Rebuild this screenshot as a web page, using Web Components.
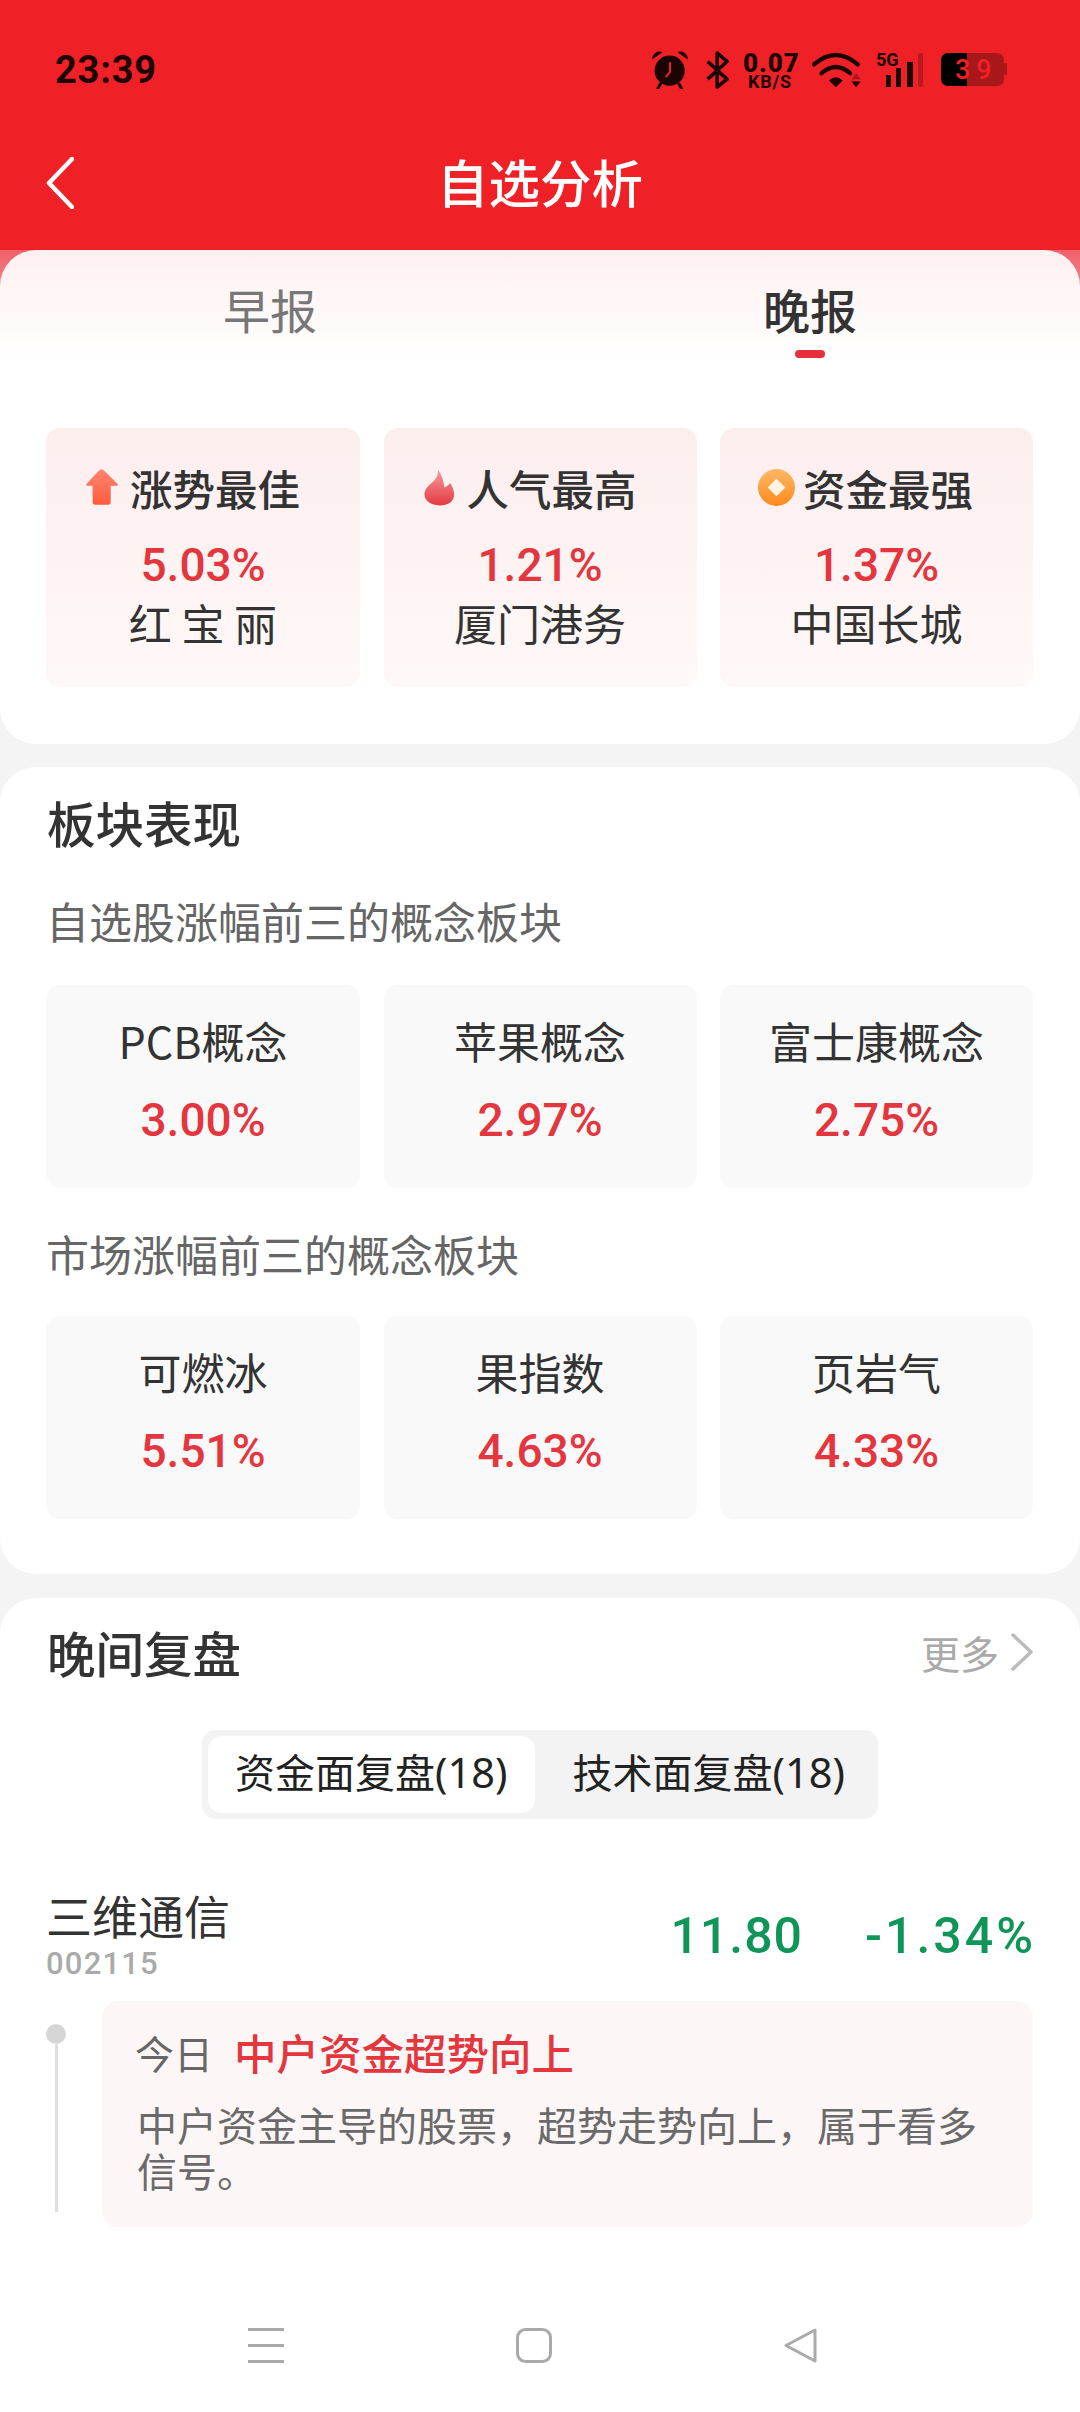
<!DOCTYPE html>
<html lang="zh-CN">
<head>
<meta charset="utf-8">
<title>自选分析</title>
<style>
  html, body { margin: 0; padding: 0; }
  body {
    width: 1080px;
    height: 2412px;
    overflow: hidden;
    display: flex;
    flex-direction: column;
    background: #f4f4f4;
    color: #333;
    font-family: "Noto Sans CJK SC", "Noto Sans", sans-serif;
  }
</style>
</head>
<body>

<template id="status-bar">
  <style>
    :host { display: flex; align-items: center; justify-content: space-between; height: 38px; padding: 51px 73px 0 55px; color: #1c0404; }
    .time { font: 700 38px/38px Roboto, sans-serif; letter-spacing: 0.8px; }
    .icons { display: flex; align-items: center; }
    svg { display: block; }
    .speed { width: 54px; margin: 0 15px 0 14px; text-align: center; font-family: Roboto, sans-serif; font-weight: 700; }
    .speed b { display: block; font-size: 26px; line-height: 22px; letter-spacing: 0.9px; padding-top: 1px; }
    .speed i { display: block; font-size: 18px; line-height: 15px; font-style: normal; letter-spacing: 0.8px; }
    .signal { position: relative; width: 47px; height: 34px; margin-left: 15px; }
    .signal span { position: absolute; left: 0; top: -3px; font: 700 18px/20px Roboto, sans-serif; }
    .battery { position: relative; width: 66px; height: 34px; margin-left: 18px; }
    .battery span { position: absolute; left: 14px; top: 1px; font: 500 27px/32px Roboto, sans-serif; letter-spacing: 6px; color: #f02027; }
  </style>
  <div class="time">23:39</div>
  <div class="icons">
    <svg width="36" height="38" viewBox="97 62 108 116">
      <circle cx="150" cy="122" r="46" fill="#1c0404"/>
      <path d="M97 86 C100 70 112 62 126 66 Z M205 86 C202 70 190 62 176 66 Z" fill="#1c0404" stroke="#1c0404" stroke-width="3" stroke-linejoin="round"/>
      <path d="M122 162 L114 176 M178 162 L186 176" stroke="#1c0404" stroke-width="9" stroke-linecap="round"/>
      <path d="M151 96 L151 126 L138 142" fill="none" stroke="#f02027" stroke-width="6"/>
    </svg>
    <svg width="23" height="38" viewBox="258 60 70 116" style="margin-left:18px">
      <path d="M263 92 L322 146 L292 170 L292 66 L322 92 L263 146" fill="none" stroke="#1c0404" stroke-width="11" stroke-linejoin="round"/>
    </svg>
    <div class="speed"><b>0.07</b><i>KB/S</i></div>
    <svg width="49" height="36" viewBox="575 66 150 108">
      <path d="M581 103 Q648 45 715 103" fill="none" stroke="#1c0404" stroke-width="13" stroke-linecap="round"/>
      <path d="M604 130 Q648 92 692 130" fill="none" stroke="#1c0404" stroke-width="13" stroke-linecap="round"/>
      <path d="M627 152 Q648 133 669 152 L648 173 Z" fill="#1c0404"/>
      <path d="M710 130 L724 148 L696 148 Z" fill="#a81818"/>
      <path d="M696 155 L724 155 L710 173 Z" fill="#1c0404"/>
    </svg>
    <div class="signal">
      <svg width="47" height="34" viewBox="876 53 47 34">
        <rect x="886" y="75" width="5" height="12" fill="#1c0404"/>
        <rect x="896" y="68" width="5" height="19" fill="#1c0404"/>
        <rect x="907" y="62" width="6" height="25" fill="#1c0404"/>
        <rect x="918" y="53" width="5" height="34" rx="2" fill="#b81a1e"/>
      </svg>
      <span>5G</span>
    </div>
    <div class="battery">
      <svg width="66" height="34" viewBox="941 54 66 34">
        <rect x="941" y="54" width="63" height="33" rx="7" fill="#a81818"/>
        <rect x="1004" y="64" width="3" height="12" rx="1.5" fill="#a81818"/>
        <path d="M948 54 H967 V87 H948 A7 7 0 0 1 941 80 V61 A7 7 0 0 1 948 54 Z" fill="#000"/>
      </svg>
      <span>39</span>
    </div>
  </div>
</template>

<template id="title-bar">
  <style>
    :host { display: grid; grid-template-columns: 1fr auto 1fr; align-items: center; height: 60px; margin-top: 62px; padding: 0 46px 39px; }
    svg { display: block; margin-top: 3px; }
    .title { font-size: 51.5px; line-height: 60px; font-weight: 500; color: #fff; }
  </style>
  <svg width="28" height="52" viewBox="0 0 28 52">
    <path d="M26 2 L3 26 L26 50" fill="none" stroke="#fff" stroke-width="4.5" stroke-linecap="round" stroke-linejoin="round"/>
  </svg>
  <div class="title"><slot></slot></div>
</template>

<template id="panel-card">
  <style>
    :host { display: block; background: #fff; border-radius: 36px; }
  </style>
  <slot></slot>
</template>

<template id="report-tabs">
  <style>
    :host { display: grid; grid-template-columns: 1fr 1fr; padding-top: 27px; text-align: center; font-size: 47px; line-height: 64px; }
    .tab { color: #777; }
    .tab.on { color: #333; font-weight: 500; }
    .tab::after { content: ""; display: block; width: 30px; height: 8px; margin: 9px auto 0; border-radius: 4px; }
    .tab.on::after { background: #e8303a; }
  </style>
  <div class="tab">早报</div>
  <div class="tab on">晚报</div>
</template>

<template id="card-row">
  <style>
    :host { display: grid; grid-template-columns: 314px 313px 313px; gap: 23.5px; padding: 0 46px; }
  </style>
  <slot></slot>
</template>

<template id="best-card">
  <style>
    :host { display: block; height: 259px; box-sizing: border-box; padding-top: 29px; border-radius: 14px; background: linear-gradient(#fdeeee, #fff8f8); text-align: center; }
    .head { display: flex; align-items: center; gap: 12px; height: 60px; padding-left: 40px; font-size: 42.5px; font-weight: 500; color: #333; }
    .pct { margin-top: 19px; font: 500 46px/59px Roboto, sans-serif; color: #e4363e; }
    .name { font-size: 43px; line-height: 54px; color: #333; }
  </style>
  <div class="head"><slot name="icon"></slot><slot name="title"></slot></div>
  <div class="pct"><slot name="pct"></slot></div>
  <div class="name"><slot name="name"></slot></div>
</template>

<template id="sector-cell">
  <style>
    :host { display: block; height: 203px; box-sizing: border-box; padding-top: 25px; border-radius: 14px; background: #f9f9f9; text-align: center; }
    .label { font-size: 43px; line-height: 60px; color: #333; }
    .pct { margin-top: 20px; font: 500 46px/60px Roboto, sans-serif; color: #e4363e; }
  </style>
  <div class="label"><slot></slot></div>
  <div class="pct"><slot name="pct"></slot></div>
</template>

<template id="section-head">
  <style>
    :host { display: flex; align-items: center; justify-content: space-between; height: 64px; padding: 0 47px; }
    .title { font-size: 48.5px; line-height: 64px; font-weight: 500; color: #333; }
    .more { display: flex; align-items: center; gap: 12px; font-size: 39px; color: #aaa; }
  </style>
  <div class="title"><slot></slot></div>
  <div class="more"><slot name="more"></slot></div>
</template>

<template id="sub-title">
  <style>
    :host { display: block; padding-left: 46px; font-size: 43px; line-height: 60px; color: #666; }
  </style>
  <slot></slot>
</template>

<template id="review-tabs">
  <style>
    :host { display: flex; justify-content: center; margin-top: 46px; }
    .box { display: flex; gap: 11px; padding: 6px; border-radius: 14px; background: #f3f3f3; font-size: 40px; line-height: 71px; color: #222; }
    .tab { padding: 0 27px 5px; border-radius: 14px; }
    .tab.on { background: #fff; }
    .n { font-family: "Noto Sans", sans-serif; font-size: 41.5px; }
  </style>
  <div class="box">
    <div class="tab on">资金面复盘<span class="n">(18)</span></div>
    <div class="tab">技术面复盘<span class="n">(18)</span></div>
  </div>
</template>

<template id="stock-row">
  <style>
    :host { display: flex; align-items: center; justify-content: space-between; margin-top: 66px; padding: 0 44px 0 46px; }
    .name { font-size: 46px; line-height: 58px; margin-bottom: 3px; color: #333; }
    .code { font: 500 31px/36px Roboto, sans-serif; color: #aaa; letter-spacing: 1.2px; }
    .quote { display: flex; gap: 62px; padding-top: 4px; font: 500 50px/60px Roboto, sans-serif; color: #0f9558; }
    .quote .price { letter-spacing: 1px; }
    .quote .change { letter-spacing: 3px; }
  </style>
  <div>
    <div class="name"><slot name="name"></slot></div>
    <div class="code"><slot name="code"></slot></div>
  </div>
  <div class="quote">
    <span class="price"><slot name="price"></slot></span>
    <span class="change"><slot name="change"></slot></span>
  </div>
</template>

<template id="signal-note">
  <style>
    :host { display: flex; gap: 36px; margin-top: 19px; padding: 0 47px 0 46px; }
    .rail { display: flex; flex-direction: column; align-items: center; width: 20px; padding: 23px 0 15px; box-sizing: border-box; }
    .dot { width: 20px; height: 20px; border-radius: 50%; background: #d6d6d6; }
    .line { width: 3px; flex: 1; background: #dedede; }
    .box { flex: 1; box-sizing: border-box; height: 226px; padding: 21px 34px 0 35px; border-radius: 16px; background: #fdf6f6; }
    .top { display: flex; gap: 21px; line-height: 60px; margin-left: -2px; }
    .day { font-size: 39px; color: #666; }
    .tag { font-size: 42.5px; font-weight: 500; color: #e4363e; }
    .body { margin-top: 19px; font-size: 40px; line-height: 46px; color: #6a6a6a; }
  </style>
  <div class="rail"><div class="dot"></div><div class="line"></div></div>
  <div class="box">
    <div class="top"><span class="day">今日</span><span class="tag"><slot name="tag"></slot></span></div>
    <div class="body"><slot></slot></div>
  </div>
</template>

<template id="nav-bar">
  <style>
    :host { display: flex; gap: 232px; margin-top: auto; padding: 0 0 49px 248px; }
    svg { display: block; }
  </style>
  <svg width="36" height="35" viewBox="0 0 36 35">
    <path d="M0 1.5 H36 M0 17.5 H36 M0 33.5 H36" stroke="#aaa" stroke-width="3"/>
  </svg>
  <svg width="36" height="35" viewBox="0 0 36 35">
    <rect x="1.5" y="1.5" width="33" height="32" rx="8" fill="none" stroke="#aaa" stroke-width="3"/>
  </svg>
  <svg width="36" height="35" viewBox="0 0 36 35">
    <path d="M31 2 L2 17.5 L31 33 Z" fill="none" stroke="#aaa" stroke-width="3" stroke-linejoin="round"/>
  </svg>
</template>

<script>
  // every element here is just its template in an open shadow root
  ['status-bar', 'title-bar', 'panel-card', 'report-tabs', 'card-row', 'best-card', 'sector-cell',
   'section-head', 'sub-title', 'review-tabs', 'stock-row', 'signal-note', 'nav-bar'].forEach((name) => {
    customElements.define(name, class extends HTMLElement {
      constructor() {
        super();
        const shadowRoot = this.attachShadow({ mode: 'open' });
        shadowRoot.appendChild(document.getElementById(name).content.cloneNode(true));
      }
    });
  });

  customElements.define('app-header', class extends HTMLElement {
    constructor() {
      super();
      this.attachShadow({ mode: 'open' }).innerHTML = `
        <style>:host { display: block; height: 250px; background: #f02027; }</style>
        <slot></slot>`;
    }
  });

  customElements.define('app-page', class extends HTMLElement {
    constructor() {
      super();
      this.attachShadow({ mode: 'open' }).innerHTML = `
        <style>
          :host { display: flex; flex-direction: column; flex: 1; gap: 23px; min-height: 0;
            background: linear-gradient(#f0606a 0, #f58a90 46px, #f4f4f4 46px); }
          ::slotted(:last-child) { flex: 1; display: flex; flex-direction: column; border-radius: 36px 36px 0 0; margin-top: 1px; }
        </style>
        <slot></slot>`;
    }
  });
</script>

<app-header>
  <status-bar></status-bar>
  <title-bar>自选分析</title-bar>
</app-header>

<app-page>
  <panel-card style="padding-bottom:57px;background:linear-gradient(#fff0f0,#fff 110px)">
    <report-tabs></report-tabs>
    <card-row style="margin-top:70px">
      <best-card>
        <svg slot="icon" width="32" height="36" viewBox="50 40 97 107" style="display:block">
          <defs><linearGradient id="a" x1="0" y1="0" x2="0" y2="1"><stop offset="0" stop-color="#ff8570"/><stop offset="1" stop-color="#ff5b3e"/></linearGradient></defs>
          <path d="M97 40 Q92 40 88 45 L52 84 Q47 90 56 90 L70 90 L70 140 Q70 147 77 147 L118 147 Q125 147 125 140 L125 90 L140 90 Q150 90 145 84 L106 45 Q102 40 97 40 Z" fill="url(#a)"/>
        </svg>
        <span slot="title">涨势最佳</span>
        <span slot="pct">5.03%</span>
        <span slot="name">红 宝 丽</span>
      </best-card>
      <best-card>
        <svg slot="icon" width="31" height="37" viewBox="70 36 95 112" style="display:block">
          <defs><linearGradient id="b" x1="0" y1="0" x2="0" y2="1"><stop offset="0" stop-color="#f79a9c"/><stop offset="1" stop-color="#e43a41"/></linearGradient></defs>
          <path d="M113 37 C126 58 131 74 132 92 C140 88 147 84 150 78 C172 110 166 147 118 147 C85 147 62 125 75 98 C84 80 116 70 113 37 Z" fill="url(#b)"/>
        </svg>
        <span slot="title">人气最高</span>
        <span slot="pct">1.21%</span>
        <span slot="name">厦门港务</span>
      </best-card>
      <best-card>
        <svg slot="icon" width="37" height="37" viewBox="55 65 110 110" style="display:block;margin:0 -4px 0 -2px">
          <defs><linearGradient id="c" x1="0" y1="0" x2="0" y2="1"><stop offset="0" stop-color="#ffb866"/><stop offset="1" stop-color="#ff8a1c"/></linearGradient></defs>
          <circle cx="110" cy="120" r="55" fill="url(#c)"/>
          <path d="M110 97 L133 120 L110 143 L87 120 Z" fill="#fff3e4" stroke="#fff3e4" stroke-width="5" stroke-linejoin="round"/>
        </svg>
        <span slot="title">资金最强</span>
        <span slot="pct">1.37%</span>
        <span slot="name">中国长城</span>
      </best-card>
    </card-row>
  </panel-card>

  <panel-card style="padding:23px 0 55px">
    <section-head>板块表现</section-head>
    <sub-title style="margin-top:36px">自选股涨幅前三的概念板块</sub-title>
    <card-row style="margin-top:35px">
      <sector-cell>PCB概念<span slot="pct">3.00%</span></sector-cell>
      <sector-cell>苹果概念<span slot="pct">2.97%</span></sector-cell>
      <sector-cell>富士康概念<span slot="pct">2.75%</span></sector-cell>
    </card-row>
    <sub-title style="margin-top:35px">市场涨幅前三的概念板块</sub-title>
    <card-row style="margin-top:33px">
      <sector-cell>可燃冰<span slot="pct">5.51%</span></sector-cell>
      <sector-cell>果指数<span slot="pct">4.63%</span></sector-cell>
      <sector-cell>页岩气<span slot="pct">4.33%</span></sector-cell>
    </card-row>
  </panel-card>

  <panel-card style="padding-top:22px">
    <section-head>晚间复盘
      <span slot="more">更多</span>
      <svg slot="more" width="22" height="38" viewBox="0 0 22 38" style="display:block">
        <path d="M2 2 L20 19 L2 36" fill="none" stroke="#bbb" stroke-width="3.5" stroke-linecap="round" stroke-linejoin="round"/>
      </svg>
    </section-head>
    <review-tabs></review-tabs>
    <stock-row>
      <span slot="name">三维通信</span>
      <span slot="code">002115</span>
      <span slot="price">11.80</span>
      <span slot="change">-1.34%</span>
    </stock-row>
    <signal-note>
      <span slot="tag">中户资金超势向上</span>
      中户资金主导的股票，超势走势向上，属于看多信号。
    </signal-note>
    <nav-bar></nav-bar>
  </panel-card>
</app-page>

</body>
</html>
